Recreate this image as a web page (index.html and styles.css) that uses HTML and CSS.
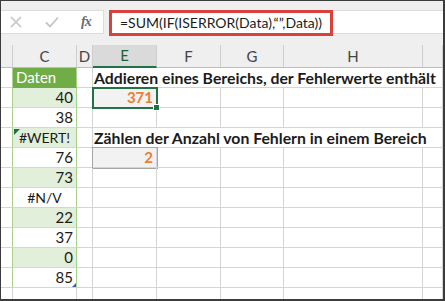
FILE: index.html
```html
<!DOCTYPE html>
<html lang="de">
<head>
  <meta charset="UTF-8" />
  <title>Fehlerwerte summieren</title>
  <link rel="stylesheet" href="styles.css">
</head>
<body>
  <div class="sheet">
    <div class="toolbar">
      <div class="fbar">
        <div class="fbar-tools">
          <svg class="tool" width="12" height="12" viewBox="0 0 12 12"><path d="M1 1 L11 11 M11 1 L1 11" stroke="#c4c4c4" stroke-width="1.6" fill="none"/></svg>
          <svg class="tool" width="14" height="12" viewBox="0 0 14 12"><path d="M1 6.5 L5 10.5 L13 1.5" stroke="#c4c4c4" stroke-width="1.8" fill="none"/></svg>
          <span class="tool-fx">fx</span>
        </div>
        <div class="fbar-input">
          <div class="formula">=SUM(IF(ISERROR(Data),“”,Data))</div>
        </div>
      </div>
    </div>

    <div class="grid">
      <!-- Spaltenköpfe -->
      <div class="hd"></div>
      <div class="hd">C</div>
      <div class="hd">D</div>
      <div class="hd hd-sel">E</div>
      <div class="hd">F</div>
      <div class="hd">G</div>
      <div class="hd">H</div>
      <div class="hd"></div>

      <div class="c a t"></div>
      <div class="c col-c th">Daten</div>
      <div class="c"></div>
      <div class="c title">Addieren eines Bereichs, der Fehlerwerte enthält</div>

      <div class="c a t"></div>
      <div class="c col-c band num">40</div>
      <div class="c"></div>
      <div class="c res sel">371</div>
      <div class="c"></div><div class="c"></div><div class="c"></div><div class="c"></div>

      <div class="c a t"></div>
      <div class="c col-c num">38</div>
      <div class="c"></div>
      <div class="c"></div><div class="c"></div><div class="c"></div><div class="c"></div><div class="c"></div>

      <div class="c a t"></div>
      <div class="c col-c band err flag">#WERT!</div>
      <div class="c"></div>
      <div class="c title">Zählen der Anzahl von Fehlern in einem Bereich</div>

      <div class="c a t"></div>
      <div class="c col-c num">76</div>
      <div class="c"></div>
      <div class="c res box">2</div>
      <div class="c"></div><div class="c"></div><div class="c"></div><div class="c"></div>

      <div class="c a t"></div>
      <div class="c col-c band num">73</div>
      <div class="c"></div>
      <div class="c"></div><div class="c"></div><div class="c"></div><div class="c"></div><div class="c"></div>

      <div class="c a t"></div>
      <div class="c col-c err">#N/V</div>
      <div class="c"></div>
      <div class="c"></div><div class="c"></div><div class="c"></div><div class="c"></div><div class="c"></div>

      <div class="c a t"></div>
      <div class="c col-c band num">22</div>
      <div class="c"></div>
      <div class="c"></div><div class="c"></div><div class="c"></div><div class="c"></div><div class="c"></div>

      <div class="c a t"></div>
      <div class="c col-c num">37</div>
      <div class="c"></div>
      <div class="c"></div><div class="c"></div><div class="c"></div><div class="c"></div><div class="c"></div>

      <div class="c a t"></div>
      <div class="c col-c band num">0</div>
      <div class="c"></div>
      <div class="c"></div><div class="c"></div><div class="c"></div><div class="c"></div><div class="c"></div>

      <div class="c a t"></div>
      <div class="c col-c num last">85</div>
      <div class="c"></div>
      <div class="c"></div><div class="c"></div><div class="c"></div><div class="c"></div><div class="c"></div>

      <div class="c a"></div>
      <div class="c"></div>
      <div class="c"></div>
      <div class="c"></div><div class="c"></div><div class="c"></div><div class="c"></div><div class="c"></div>
    </div>
  </div>
</body>
</html>
```

FILE: styles.css
```css
:root {
  --rahmen: #3c3c3c;
  --grau: #efefef;
  --linie: #d4d4d4;
  --gruen: #217346;
  --tab-gruen: #70ad47;
  --tab-band: #e2efda;
  --tab-linie: #a9d08e;
  --orange: #ed7d31;
  --rot: #d9413b;
}

body {
  margin: 0;
  font-family: Lato, "Liberation Sans", sans-serif;
  color: #1b1b1b;
}

.sheet {
  width: 445px;
  height: 301px;
  box-sizing: border-box;
  border: 1px solid var(--rahmen);
  border-right-width: 2px;
  border-bottom-width: 2px;
  overflow: hidden;
  background: #fff;
}

.toolbar {
  height: 44px;
  background: var(--grau);
  padding-top: 9px;
  box-sizing: border-box;
}

.fbar {
  display: flex;
  height: 24px;
}

.fbar-tools {
  width: 103px;
  background: #fff;
  border: 1px solid #dcdcdc;
  border-left: none;
  box-sizing: border-box;
  display: flex;
  align-items: center;
}

.tool {
  display: block;
}

.fbar-tools svg:first-child {
  margin-left: 9px;
}

.fbar-tools svg:nth-child(2) {
  margin-left: 23px;
}

.tool-fx {
  margin-left: 22px;
  font-family: "Liberation Serif", serif;
  font-style: italic;
  font-weight: bold;
  font-size: 14px;
  color: #6b6b6b;
  letter-spacing: -1px;
}

.fbar-input {
  flex: 1;
  margin-left: 5px;
  background: #fff;
  border: 1px solid #dcdcdc;
  border-right: none;
  box-sizing: border-box;
  height: 24px;
}

.formula {
  width: 224px;
  height: 26px;
  margin: -1px 0 0 -1px;
  box-sizing: border-box;
  border: 3px solid var(--rot);
  font-size: 14px;
  line-height: 20px;
  padding-left: 8px;
  white-space: nowrap;
  background: #fff;
}

.grid {
  display: grid;
  grid-template-columns: 12px 64px 16px 64px 64px 63px 139px 20px;
  grid-template-rows: 23px repeat(11, 20px) 20px;
}

.hd {
  background: var(--grau);
  border-right: 1px solid #cdcdcd;
  border-bottom: 1px solid #bdbdbd;
  text-align: center;
  font-size: 15px;
  line-height: 22px;
  color: #444;
}

.hd-sel {
  background: #dadada;
  border-bottom: 2px solid var(--gruen);
  line-height: 21px;
  color: #1e5e3a;
}

.c {
  border-right: 1px solid var(--linie);
  border-bottom: 1px solid var(--linie);
  font-size: 15px;
  line-height: 19px;
  padding: 0 3px;
  white-space: nowrap;
  position: relative;
}

.a {
  padding: 0;
}

.a.t {
  border-right-color: var(--tab-linie);
}

.col-c {
  border-right-color: var(--tab-linie);
  border-bottom-color: #cbdfbd;
}

.th {
  background: var(--tab-gruen);
  color: #fff;
  border-bottom-color: var(--tab-gruen);
}

.band {
  background: var(--tab-band);
}

.num {
  text-align: right;
}

.err {
  text-align: center;
  font-size: 14px;
}

.flag::before {
  content: "";
  position: absolute;
  left: 1px;
  top: 1px;
  border-top: 6px solid #1e7145;
  border-right: 6px solid transparent;
}

.last::after {
  content: "";
  position: absolute;
  right: 0;
  bottom: 0;
  border-bottom: 4px solid #4a58a8;
  border-left: 4px solid transparent;
}

.title {
  grid-column: span 5;
  font-weight: bold;
  font-size: 15.8px;
  padding-left: 1px;
  overflow: visible;
}

.res {
  background: #f2f2f2;
  color: var(--orange);
  font-weight: bold;
  text-align: right;
}

.sel {
  outline: 2px solid var(--gruen);
  outline-offset: -1px;
  z-index: 1;
}

.sel::after {
  content: "";
  position: absolute;
  right: -4px;
  bottom: -4px;
  width: 5px;
  height: 5px;
  background: var(--gruen);
  border: 1px solid #fff;
}

.box {
  outline: 1px solid #a6a6a6;
}
```
